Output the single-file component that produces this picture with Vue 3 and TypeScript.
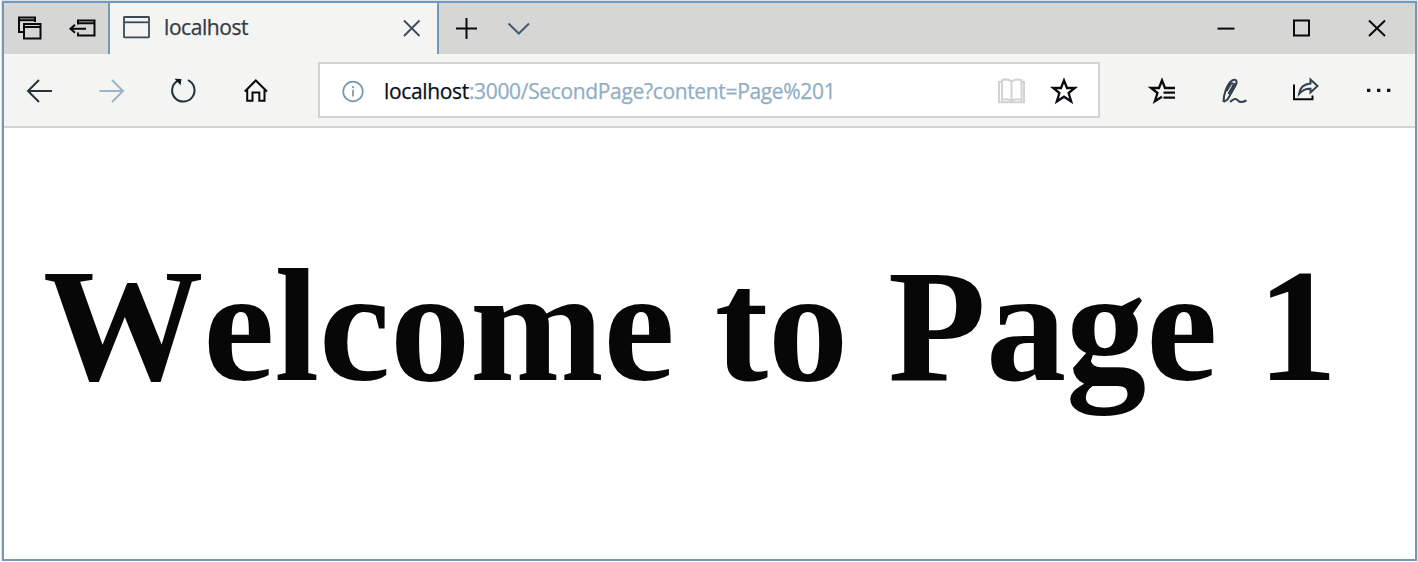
<script setup lang="ts">
import { ref } from 'vue'

const tabTitle = ref('localhost')
const host = ref('localhost')
const path = ref(':3000/SecondPage?content=Page%201')
const heading = ref('Welcome to Page 1')
</script>

<template>
  <div class="window">
    <div class="tabbar">
      <div class="tab-actions">
        <svg width="104" height="51" viewBox="4 3 104 51" class="icon">
          <path d="M24 32H19V17.5H35V22" />
          <path d="M19 20.2H35" />
          <rect x="24" y="24" width="16.5" height="14.5" />
          <path d="M24 27H40" />
          <path d="M78 24.5V20.5H94.5V35.5H78V32.5M78 23.2H94" />
          <path d="M86 28.7H71M75 24.7L70.5 28.7L75 32.7" />
        </svg>
      </div>
      <div class="tab">
        <svg width="54" height="51" viewBox="110 3 54 51" class="icon thin">
          <rect x="124" y="17" width="25" height="20.3" rx="0.5" />
          <path d="M124 22.3H149" />
        </svg>
        <span class="tab-title">{{ tabTitle }}</span>
        <svg width="54" height="51" viewBox="383 3 54 51" class="icon thin">
          <path d="M404 20.5L419.5 36M419.5 20.5L404 36" />
        </svg>
      </div>
      <svg width="106" height="51" viewBox="439 3 106 51" class="icon">
        <path d="M456 28.6H477M466.5 18V39" />
        <path class="soft" d="M508.5 23.5L518.8 33.5L529 23.5" />
      </svg>
      <svg width="215" height="51" viewBox="1200 3 215 51" class="icon controls">
        <path d="M1217.5 28.6H1234.5" />
        <rect x="1294" y="20.5" width="15" height="15" />
        <path d="M1369 20.5L1385 36M1385 20.5L1369 36" />
      </svg>
    </div>

    <div class="toolbar">
      <svg width="314" height="72" viewBox="4 54 314 72" class="icon">
        <path d="M52 91H28.5M39 80L28 91L39 102" class="nav" />
        <path d="M99.5 91H122.5M112 80L123 91L112 102" class="pale" />
        <path d="M188 80.2A11.2 11.2 0 1 1 177.5 80.8" class="nav" />
        <path d="M174.5 78.8L181.4 79L180.6 85.2Z" class="solid" />
        <path d="M244.8 91.5L255.8 80.5L267 91.5M247.2 89.5V100.8H252.5V92.5H259.3V100.8H264.5V89.5" />
      </svg>
      <div class="address">
        <svg width="64" height="52" viewBox="320 64 64 52" class="icon info">
          <circle cx="353" cy="91.5" r="9.8" />
          <path d="M353 89.7V96.5M353 86V88" />
        </svg>
        <span class="url"><span class="host">{{ host }}</span>{{ path }}</span>
        <svg width="110" height="52" viewBox="988 64 110 52" class="icon">
          <path
            class="book"
            d="M1011.5 81.5C1008.5 79 1005 79 1002 80.2V100C1005 99 1009 99 1011.5 101C1014 99 1018 99 1021.5 100V80.2C1018 79 1014.5 79 1011.5 81.5V100M1002 82H999V102.2H1024V82H1021.5"
          />
          <path class="star" d="M1064 80.3L1067 88H1074.8L1068.6 93L1071.2 101.5L1064 96.7L1056.8 101.5L1059.4 93L1053.2 88H1061Z" />
        </svg>
      </div>
      <svg width="314" height="72" viewBox="1100 54 314 72" class="icon">
        <path class="star" d="M1175 88H1165L1162 80.3L1159 88H1151L1157.5 93L1154.8 101.3L1162 96.7M1163.5 92.7H1175M1163.5 97.7H1175" />
        <path class="pen" d="M1223.5 102C1223.5 94 1227 84 1232 80.5C1236 78.5 1238 81 1235.5 85.5L1227.5 99.5L1223.5 102M1226.5 91L1231.5 83L1234 84L1228.5 94M1230 102C1234 98.5 1236 98 1238 100.5C1240 102.8 1242 102.5 1246.5 100.5" />
        <path d="M1294 84.5V99.2H1312.5V95.5" />
        <path class="share" d="M1299 94C1300 87.5 1304.5 84 1310.5 83.5V79.5L1317.5 86L1310.5 92.5V88.8C1306 88.5 1302 90.5 1299 94Z" />
        <path class="solid" d="M1367 88.7h3.4v3.2h-3.4zM1377 88.7h3.4v3.2h-3.4zM1387 88.7h3.4v3.2h-3.4z" />
      </svg>
    </div>

    <main class="page">
      <h1>{{ heading }}</h1>
    </main>
  </div>
</template>

<style>
body {
  margin: 0;
  background: #fff;
}
</style>

<style scoped>
.window {
  box-sizing: border-box;
  width: 1415px;
  height: 560px;
  margin: 1px 0 0 2px;
  border: 2px solid #7299bb;
  background: #fff;
  display: flow-root;
  font-family: "Open Sans", "Noto Sans", sans-serif;
  outline: 1px solid #d8e4ed;
}
.tabbar {
  display: flex;
  height: 51px;
  background: #d6d6d4;
}
.tab-actions {
  width: 104px;
}
.tab {
  display: flex;
  width: 327px;
  border: solid #7299bb;
  border-width: 0 2px;
  background: #f4f4f2;
}
.tab-title {
  flex: 1;
  font-size: 21px;
  line-height: 48px;
  letter-spacing: -0.42px;
  color: #333b45;
  white-space: nowrap;
  -webkit-text-stroke: 0.25px currentColor;
}
.controls {
  margin-left: auto;
}
.icon {
  display: block;
  flex: none;
  fill: none;
  stroke: #080a0d;
  stroke-width: 2;
}
.thin {
  stroke: #3c4a58;
  stroke-width: 1.8;
}
.icon .soft {
  stroke: #465b6e;
}
.nav {
  stroke: #28323c;
}
.pale {
  stroke: #9bb5ca;
}
.solid {
  fill: #101820;
  stroke: none;
}
.star {
  stroke-width: 2.3;
}
.info {
  stroke: #7598b5;
  stroke-width: 1.7;
}
.book {
  stroke: #d0d3d3;
}
.pen,
.share {
  stroke: #34414e;
}
.toolbar {
  display: flex;
  height: 72px;
  background: #f4f4f2;
  border-bottom: 2px solid #d3d3d1;
}
.address {
  box-sizing: border-box;
  display: flex;
  width: 782px;
  height: 56px;
  margin-top: 8px;
  border: 2px solid #d3d3d1;
  background: #fff;
}
.url {
  flex: 1;
  font-size: 21px;
  line-height: 54px;
  letter-spacing: -0.34px;
  color: #91adc4;
  white-space: nowrap;
  -webkit-text-stroke: 0.25px currentColor;
}
.host {
  color: #0b1016;
}
h1 {
  margin: 108px 0 0 39px;
  font: bold 160.5px/180px "Liberation Serif", "Times New Roman", serif;
  font-kerning: none;
  letter-spacing: -0.15px;
  color: #070707;
  white-space: nowrap;
}
</style>
